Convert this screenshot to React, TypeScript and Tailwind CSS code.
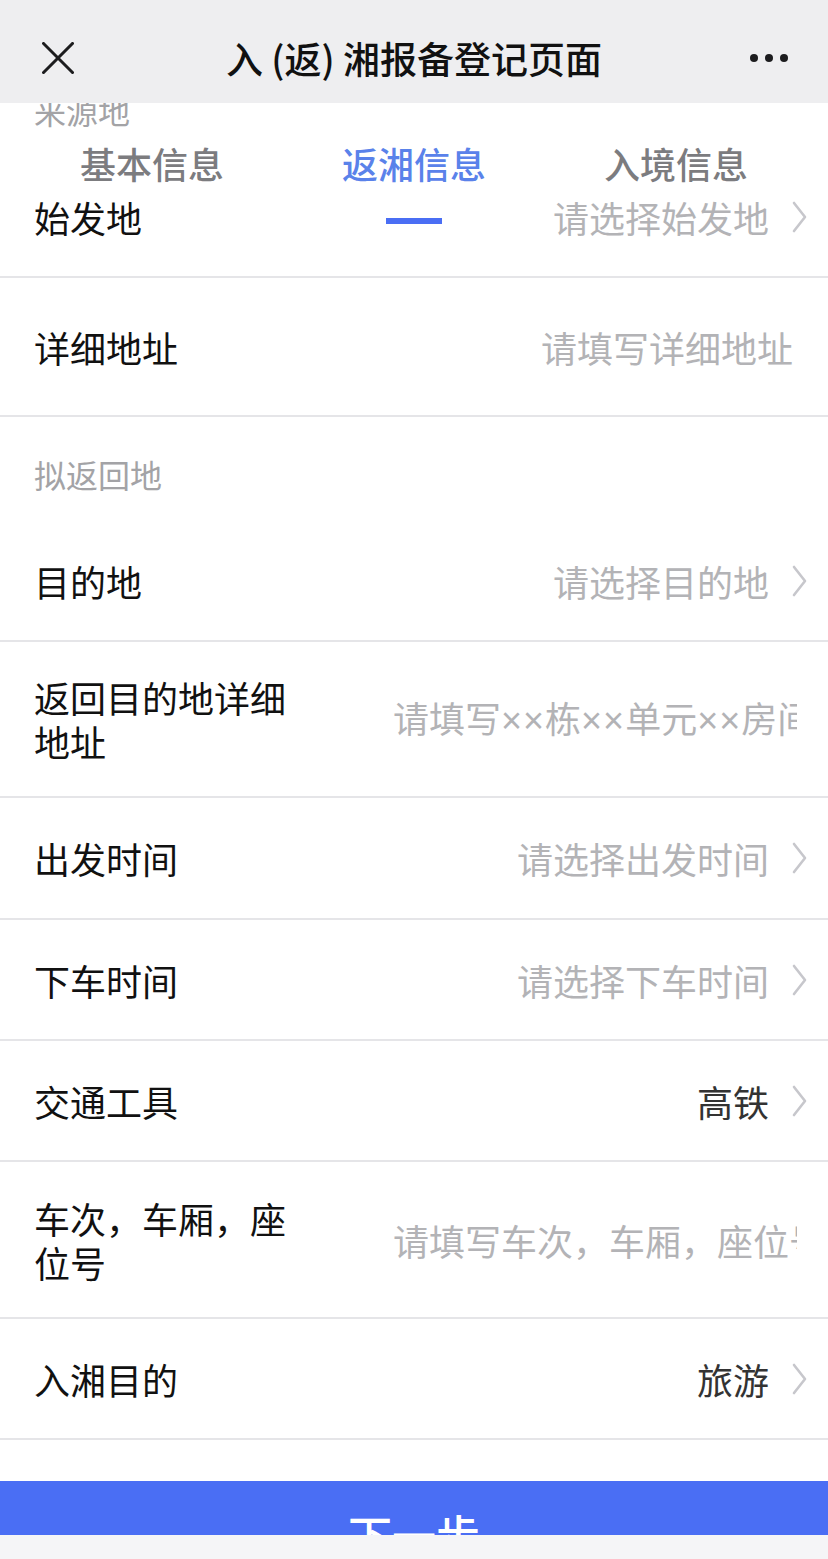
import React from "react";

const FONT = '"Noto Sans CJK SC", "Noto Sans", sans-serif';

function Chevron() {
  return (
    <svg width="17" height="32" viewBox="0 0 17 32" className="ml-[22px] shrink-0">
      <polyline points="3,2 14,16 3,30" fill="none" stroke="#c7c7cc" strokeWidth="2.6" strokeLinecap="round" strokeLinejoin="round" />
    </svg>
  );
}

function X2() {
  return <span style={{ fontFamily: '"Liberation Sans", Arial, sans-serif' }} className="tracking-[1px]">××</span>;
}

function SelectRow({ label, value, placeholder, h }: { label: string; value?: string; placeholder?: string; h: string }) {
  return (
    <div className={`flex items-center border-b-2 border-[#e5e5e8] pl-[34px] pr-[20px] ${h}`}>
      <div className="text-[36px] leading-[44px] text-[#111]">{label}</div>
      <div className="ml-auto flex items-center">
        {value ? (
          <span className="text-[36px] leading-[44px] text-[#333]">{value}</span>
        ) : (
          <span className="text-[36px] leading-[44px] text-[#b3b3b6]">{placeholder}</span>
        )}
        <Chevron />
      </div>
    </div>
  );
}

function InputRow({ label, placeholder, h }: { label: string; placeholder: React.ReactNode; h: string }) {
  return (
    <div className={`flex items-center border-b-2 border-[#e5e5e8] pl-[34px] pr-[31px] ${h}`}>
      <div className="w-[256px] shrink-0 text-[36px] leading-[44px] text-[#111]">{label}</div>
      <div className="ml-auto w-[404px] overflow-hidden whitespace-nowrap text-right text-[36px] leading-[44px] text-[#b3b3b6]">
        {placeholder}
      </div>
    </div>
  );
}

function Section({ title, className = "" }: { title: string; className?: string }) {
  return (
    <div className={`h-[104px] pl-[34px] pt-[38px] ${className}`}>
      <div className="text-[32px] leading-[38px] text-[#a3a3a6]">{title}</div>
    </div>
  );
}

export default function App() {
  return (
    <div className="flex h-[1559px] w-[828px] flex-col overflow-hidden bg-white" style={{ fontFamily: FONT }}>
      {/* Header */}
      <div className="grid h-[103px] shrink-0 grid-cols-[1fr_auto_1fr] items-center bg-[#eeeef0] pt-[13px]">
        <div className="pl-[42px]">
          <svg width="32" height="32" viewBox="0 0 32 32">
            <path d="M1.5 1.5 L30.5 30.5 M30.5 1.5 L1.5 30.5" stroke="#1c1c1e" strokeWidth="3" strokeLinecap="square" />
          </svg>
        </div>
        <div className="text-[37px] font-medium leading-[44px] text-[#111]">入 (返) 湘报备登记页面</div>
        <div className="flex items-center justify-end gap-[7px] pr-[40px]">
          <span className="h-[8px] w-[8px] rounded-full bg-[#1c1c1e]" />
          <span className="h-[8px] w-[8px] rounded-full bg-[#1c1c1e]" />
          <span className="h-[8px] w-[8px] rounded-full bg-[#1c1c1e]" />
        </div>
      </div>

      {/* Scrolled content */}
      <div className="relative flex-1 overflow-hidden">
        <div className="mt-[-50px]">
          <Section title="来源地" />
          <SelectRow label="始发地" placeholder="请选择始发地" h="h-[121px]" />
          <InputRow label="详细地址" placeholder={<span className="pr-[4px]">请填写详细地址</span>} h="h-[139px]" />
          <Section title="拟返回地" />
          <SelectRow label="目的地" placeholder="请选择目的地" h="h-[121px]" />
          <InputRow
            label="返回目的地详细地址"
            placeholder={
              <>
                请填写<X2 />栋<X2 />单元<X2 />房间号
              </>
            }
            h="h-[156px]"
          />
          <SelectRow label="出发时间" placeholder="请选择出发时间" h="h-[122px]" />
          <SelectRow label="下车时间" placeholder="请选择下车时间" h="h-[121px]" />
          <SelectRow label="交通工具" value="高铁" h="h-[121px]" />
          <InputRow label="车次，车厢，座位号" placeholder="请填写车次，车厢，座位号" h="h-[157px]" />
          <SelectRow label="入湘目的" value="旅游" h="h-[121px]" />
          <div className="h-[41px]" />
          <div className="flex h-[110px] justify-center bg-[#4a6ef4] pt-[31px]">
            <span className="text-[44px] font-medium leading-[44px] text-white">下一步</span>
          </div>
        </div>

        {/* Tabs overlay */}
        <div className="absolute left-0 right-0 top-[38px] grid grid-cols-3 px-[21px]">
          <div className="flex flex-col items-center">
            <span className="text-[36px] font-medium leading-[44px] text-[#7c7c7f]">基本信息</span>
          </div>
          <div className="flex flex-col items-center">
            <span className="text-[36px] font-medium leading-[44px] text-[#5a82ea]">返湘信息</span>
            <span className="mt-[33px] h-[6px] w-[56px] bg-[#4a6ef4]" />
          </div>
          <div className="flex flex-col items-center">
            <span className="text-[36px] font-medium leading-[44px] text-[#7c7c7f]">入境信息</span>
          </div>
        </div>
      </div>

      {/* Bottom bar */}
      <div className="h-[24px] shrink-0 bg-[#f5f5f7]" />
    </div>
  );
}
